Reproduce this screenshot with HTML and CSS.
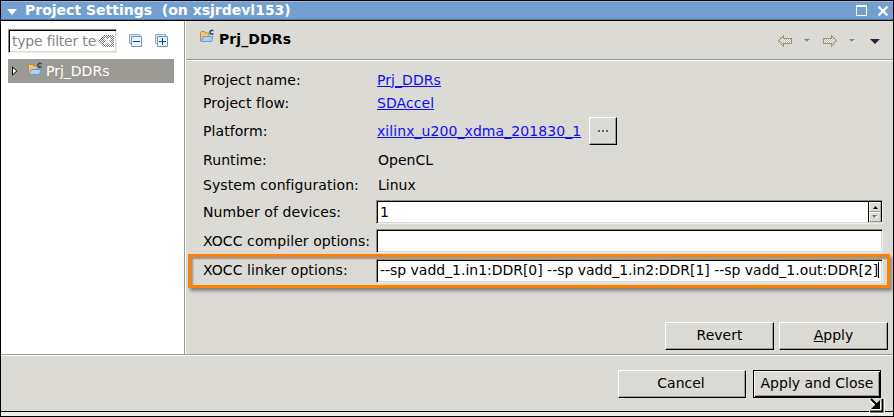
FILE: index.html
```html
<!DOCTYPE html>
<html lang="en">
<head>
<meta charset="utf-8">
<title>Project Settings</title>
<link rel="stylesheet" href="styles.css">
</head>
<body>
<svg width="0" height="0" class="defs">
  <defs>
    <pattern id="check" width="2" height="2" patternUnits="userSpaceOnUse"><rect width="2" height="2" fill="#fff"/><path d="M0 0h1v1H0zM1 1h1v1H1z" fill="#777"/></pattern>
    <pattern id="dither" width="2" height="2" patternUnits="userSpaceOnUse"><rect width="2" height="2" fill="#f8f7f2"/><path d="M0 0h1v1H0zM1 1h1v1H1z" fill="#b9b7a8"/></pattern>
    <symbol id="folder" viewBox="0 0 16 16">
      <path d="M1.500 12V3.500l1-1h3l1 1.500H10v4" fill="#f0c47c" stroke="#c58a35"/>
      <path d="M4.500 7.500h9.500l-1.500 5H2.200z" fill="#a9d3f5" stroke="#6b9ccc"/>
      <path d="M14.500 1.500h-2.500l-1 1v1.500l1 1h2.500" fill="none" stroke="#17457a" stroke-width="1.400"/>
    </symbol>
    <symbol id="arrow" viewBox="0 0 16 14">
      <path d="M1.500 6.500L6.500 1.500V4.500H14.500V9.500H6.500V12.500z" fill="url(#dither)" stroke="#c1bda9"/>
      <path d="M1.500 6.500L6.500 1.500V4.500H14.500V9.500H6.500V12.500z" fill="none" stroke="#756743" stroke-dasharray="1 1"/>
    </symbol>
  </defs>
</svg>
<div class="window">
  <header class="titlebar">
    <svg class="menu-mark" width="10" height="6"><path d="M0 0h10L5 6z" fill="#fff"/></svg>
    <h1>Project Settings&nbsp; (on xsjrdevl153)</h1>
    <svg class="maxi" width="12" height="12" shape-rendering="crispEdges"><path d="M.5 1H10.500V10.500H.5z" fill="none" stroke="#fff"/><path d="M0 0h11v2H0z" fill="#fff"/></svg>
    <svg class="close" width="12" height="12"><path d="M1.500 1.500l9 9M10.500 1.500l-9 9" stroke="#fff" stroke-width="2.300"/></svg>
  </header>
  <main>
    <aside>
      <div class="filter-row">
        <div class="field filter"><span>type filter te</span>
          <svg width="16" height="12"><path d="M0 6L6 0H16V12H6z" fill="url(#check)"/><path d="M6.500 3l6 6M12.500 3l-6 6" stroke="#fff" stroke-width="2"/></svg>
        </div>
        <svg class="fold" width="14" height="14"><path d="M.5 9.500V.5H10.500V3" fill="#d9ebf7" stroke="#8fa9c6"/><path d="M.5 9.500H3" stroke="#8fa9c6"/><path d="M2.500 2.500h10v10h-10z" fill="#e6f4fc" stroke="#7894b5"/><path d="M4 7.500h7" stroke="#084a86"/></svg>
        <svg class="fold" width="14" height="14"><path d="M.5 9.500V.5H10.500V3" fill="#d9ebf7" stroke="#8fa9c6"/><path d="M.5 9.500H3" stroke="#8fa9c6"/><path d="M2.500 2.500h10v10h-10z" fill="#e6f4fc" stroke="#7894b5"/><path d="M4 7.500h7M7.500 4v7" stroke="#084a86"/></svg>
      </div>
      <div class="tree-item">
        <svg width="6" height="10"><path d="M.5 1L4.800 5L.5 9z" fill="#fff" stroke="#000"/></svg>
        <svg class="tree-icon" width="16" height="16"><use href="#folder"/></svg>
        <span>Prj_DDRs</span>
      </div>
    </aside>
    <section class="page">
      <div class="page-head">
        <svg class="head-icon" width="16" height="16"><use href="#folder"/></svg>
        <h2>Prj_DDRs</h2>
        <nav>
          <svg class="back" width="16" height="14"><use href="#arrow"/></svg>
          <svg class="drop" width="6" height="4"><path d="M1 1h5L3.500 4z" fill="#fff"/><path d="M0 0h6L3 3z" fill="#888"/></svg>
          <svg class="next" width="16" height="14"><use href="#arrow"/></svg>
          <svg class="drop" width="6" height="4"><path d="M1 1h5L3.500 4z" fill="#fff"/><path d="M0 0h6L3 3z" fill="#888"/></svg>
          <svg class="view" width="10" height="5"><path d="M0 0h10L5 5z" fill="#28203c"/></svg>
        </nav>
      </div>
      <div class="form">
        <div class="row"><label>Project name:</label><a>Prj_DDRs</a></div>
        <div class="row"><label>Project flow:</label><a>SDAccel</a></div>
        <div class="row platform"><label>Platform:</label><a>xilinx_u200_xdma_201830_1</a><button class="browse"><i></i><i></i><i></i></button></div>
        <div class="row text"><label>Runtime:</label><span>OpenCL</span></div>
        <div class="row text"><label>System configuration:</label><span>Linux</span></div>
        <div class="row input devices"><label>Number of devices:</label>
          <div class="field">1<div class="spinner"><b><svg width="5" height="3"><path d="M0 3h5L2.500 0z"/></svg></b><b><svg width="6" height="4"><path d="M1 1h5L3.500 4z" fill="#fff"/><path d="M0 0h5L2.500 3z" fill="#777"/></svg></b></div></div></div>
        <div class="row input"><label>XOCC compiler options:</label><div class="field"></div></div>
        <div class="row input linker"><label>XOCC linker options:</label><div class="field">--sp vadd_1.in1:DDR[0] --sp vadd_1.in2:DDR[1] --sp vadd_1.out:DDR[2]<em></em></div></div>
      </div>
      <div class="actions"><button>Revert</button><button><span><u>A</u>pply</span></button></div>
    </section>
  </main>
  <footer><button class="cancel">Cancel</button><button class="default">Apply and Close</button></footer>
  <svg class="cursor" width="18" height="18"><path d="M2 2l9 9M11 4v7H4M0 14h14V1" fill="none" stroke="#fff" stroke-width="4"/><path d="M2 1l8 8" stroke="#000" stroke-width="2"/><path d="M11 2v9H2z"/><path d="M1 13.500H13.500V1" fill="none" stroke="#000" stroke-width="2"/></svg>
</div>
</body>
</html>
```

FILE: styles.css
```css
* { box-sizing: border-box; }
body { margin: 0; font: 14px/18px "DejaVu Sans", sans-serif; color: #000; }
.defs { position: absolute; }
svg { display: block; flex: none; }
h1, h2 { margin: 0; font-weight: bold; white-space: nowrap; }
.window { position: relative; width: 894px; height: 417px; border: 1px solid #000; background: #dbdad5; display: flex; flex-direction: column; }
.window::after { content: ""; height: 4px; flex: none; border-top: 1px solid #000; background: #ebebe9; }
.titlebar { height: 20px; flex: none; display: flex; align-items: center; padding: 0 4px 0 6px; background: #729fd0; border-bottom: 1px solid #000; box-shadow: inset 0 1px #9bbce0, inset 0 -1px #527aa8; }
.titlebar h1 { flex: 1; font-size: 14px; color: #fff; margin: -1px 0 0 8px; }
.menu-mark { margin-top: 3px; }
.maxi { margin-right: 9px; margin-top: 1px; }
.close { margin-top: 1px; }
main { height: 335px; flex: none; display: flex; border-bottom: 1px solid #fff; box-shadow: inset 0 -1px #9d9b95; padding-bottom: 1px; }
aside { width: 185px; background: #fff; border-right: 1px solid #fff; box-shadow: inset -1px 0 #9d9b95; padding: 8px 10px 0 7px; }
.filter-row { display: flex; height: 24px; align-items: center; }
.field { height: 24px; background: #fff; border: 1px solid; border-color: #8e8c87 #efeeea #efeeea #8e8c87; box-shadow: inset 1px 1px #000, inset -1px -1px #d8d7d2; }
.filter { width: 109px; display: flex; align-items: center; color: #858585; padding-left: 3px; }
.filter span { width: 86px; white-space: nowrap; letter-spacing: -0.2px; }
.fold { margin-left: 12px; }
.tree-item { margin-top: 6px; height: 24px; width: 166px; background: #9c9a94; color: #fff; display: flex; align-items: center; padding-left: 4px; }
.tree-item span { margin-top: -1px; }
.tree-icon { margin: -3px 3px 0 9px; }
.page { flex: 1; display: flex; flex-direction: column; min-width: 0; }
.page-head { height: 40px; flex: none; display: flex; padding: 8px 13px 0 13px; border-bottom: 1px solid #fff; box-shadow: inset 0 -1px #9d9b95; }
.page-head h2 { font-size: 14px; line-height: 20px; margin-left: 4px; flex: 1; letter-spacing: .1px; }
nav { display: flex; align-items: center; height: 24px; }
.back { margin-right: 1px; }
.back + .drop { margin-left: 10px; }
.next { transform: scaleX(-1); margin-left: 12px; }
.next + .drop { margin-left: 11px; }
.view { margin-left: 15px; }
.form { padding: 7px 10px 0 17px; }
.row { display: flex; align-items: center; height: 23px; }
.row label { width: 173px; flex: none; white-space: nowrap; letter-spacing: .08px; }
.row a { color: #1010ee; text-decoration: underline; margin-left: 1px; letter-spacing: .07px; }
.row.text span { margin-left: 2px; }
.platform { height: 33px; }
.row.text { height: 25px; }
.input { height: 24px; margin-bottom: 5px; }
.devices { margin-top: 3px; }
.input .field { flex: 1; line-height: 22px; padding-left: 4px; white-space: nowrap; }
.devices .field { display: flex; justify-content: space-between; padding-left: 3px; }
.spinner { width: 14px; margin: 1px 0 1px 0; border-left: 1px solid #000; border-right: 1px solid #000; background: #dbdad5; }
.spinner b { display: flex; height: 10px; align-items: center; justify-content: center; border: 1px solid; border-color: #fff #aaa #999 #fff; }
.linker { margin: -4px -7px 0 -15px; height: 34px; padding: 0 4px 0 12px; border: 3px solid #ff8000; box-shadow: 2px 3px 3px #0006, inset 2px 2px 2px #0005; }
.linker label { margin-top: -2px; }
.linker .field { padding-left: 3px; line-height: 20px; letter-spacing: -.025px; }
.linker em { display: inline-block; width: 1px; height: 16px; background: #000; vertical-align: -3px; }
button { font: inherit; color: #000; background: #dbdad5; border: 1px solid; border-color: #fff #000 #000 #fff; box-shadow: inset -1px -1px #9d9b95; padding: 0 0 2px; height: 28px; width: 109px; white-space: nowrap; }
.browse { width: 28px; height: 28px; margin-left: 8px; padding: 0; display: flex; gap: 2px; justify-content: center; align-items: center; }
.browse i { width: 2px; height: 2px; background: #666; }
.actions { margin-top: auto; display: flex; justify-content: flex-end; gap: 5px; padding: 0 5px 4px 0; }
footer { flex: 1; display: flex; justify-content: flex-end; gap: 7px; padding: 14px 12px 0 0; }
.cancel { width: 128px; padding-right: 2px; }
.default { width: 128px; border: 1px solid #000; box-shadow: inset 1px 1px #fff, inset -1px -1px #000, inset -2px -2px #9d9b95; }
.cursor { position: absolute; left: 868px; top: 397px; }
```
